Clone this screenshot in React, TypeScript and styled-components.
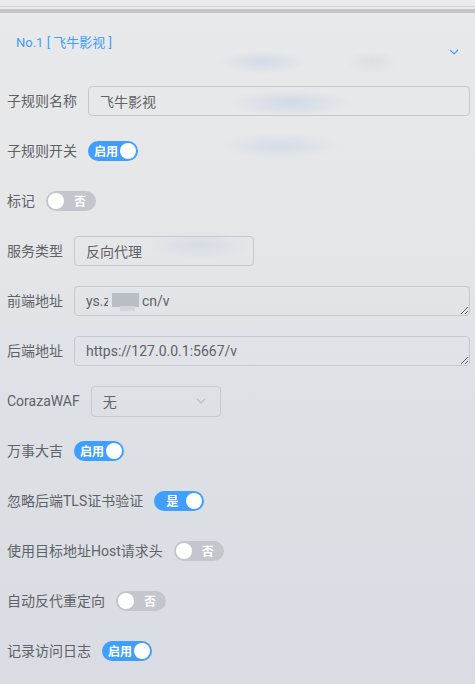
import React from "react";
import styled, { createGlobalStyle } from "styled-components";

const Global = createGlobalStyle`
  html, body { margin: 0; padding: 0; }
  body {
    font-family: Roboto, "Noto Sans CJK SC", sans-serif;
    background: #e6e7e9;
  }
  * { box-sizing: border-box; }
`;

const Page = styled.div`
  width: 475px;
  height: 684px;
  overflow: hidden;
  display: flex;
  flex-direction: column;
  background-color: #e6e8ea;
  background-image:
    radial-gradient(ellipse 45px 12px at 262px 62px, rgba(196, 210, 230, 0.6), rgba(196, 210, 230, 0) 100%),
    radial-gradient(ellipse 26px 12px at 372px 62px, rgba(210, 212, 216, 0.5), rgba(210, 212, 216, 0) 100%),
    radial-gradient(ellipse 62px 14px at 290px 103px, rgba(198, 210, 228, 0.65), rgba(198, 210, 228, 0) 100%),
    radial-gradient(ellipse 60px 13px at 280px 146px, rgba(198, 210, 228, 0.55), rgba(198, 210, 228, 0) 100%),
    radial-gradient(ellipse 50px 14px at 200px 245px, rgba(200, 210, 226, 0.5), rgba(200, 210, 226, 0) 100%),
    linear-gradient(180deg, #e8e9ea 0%, #e6e7e9 30%, #dde1e6 60%, #d9dde3 100%);
`;

const TopStrip = styled.div`
  height: 13px;
  flex: none;
  background: #ebebeb;
  border-top: 6px solid #ebebeb;
  display: flex;
  flex-direction: column;
`;

const TopLine = styled.div`
  height: 1px;
  background: #d2d3d4;
  margin-bottom: 2px;
`;

const TopBand = styled.div`
  height: 4px;
  background: #c2c6cc;
`;

const Panel = styled.div`
  flex: 1;
  display: flex;
  flex-direction: column;
  padding: 20px 5px 0 7px;
`;

const Header = styled.div`
  display: flex;
  justify-content: space-between;
  align-items: flex-start;
  padding: 0 11px 0 9px;
  height: 53px;
`;

const Title = styled.div`
  color: #409eff;
  font-size: 13px;
  line-height: 20px;
`;

const Chevron = styled.svg`
  margin-top: 16px;
`;

const Form = styled.div`
  display: flex;
  flex-direction: column;
  gap: 20px;
`;

const Row = styled.div`
  display: flex;
  align-items: center;
  height: 30px;
`;

const Label = styled.span`
  font-size: 14px;
  color: #606266;
  margin-right: 11px;
  white-space: nowrap;
  line-height: 20px;
  font-family: Roboto, "Noto Sans CJK SC", sans-serif;
`;

const Input = styled.input<{ $w?: number }>`
  height: 30px;
  ${(p) => (p.$w ? `width: ${p.$w}px;` : "flex: 1;")}
  border: 1px solid #c6c9ce;
  border-radius: 4px;
  background: transparent;
  padding: 0 11px;
  font-size: 14px;
  color: #606266;
  font-family: Roboto, "Noto Sans CJK SC", sans-serif;
  outline: none;
`;

const AreaWrap = styled.div`
  flex: 1;
  position: relative;
  height: 30px;
  display: flex;
`;

const Area = styled.textarea`
  flex: 1;
  height: 30px;
  border: 1px solid #c6c9ce;
  border-radius: 4px;
  background: transparent;
  padding: 5px 11px;
  font-size: 14px;
  line-height: 18px;
  color: #606266;
  font-family: Roboto, "Noto Sans CJK SC", sans-serif;
  outline: none;
  resize: vertical;
  overflow: hidden;
`;

const Mask = styled.div`
  position: absolute;
  left: 34px;
  top: 4px;
  width: 34px;
  height: 22px;
  background: #e0e3e7;
  filter: blur(0.6px);
  &::before {
    content: "";
    position: absolute;
    left: 4px;
    top: 3px;
    width: 27px;
    height: 14px;
    background: #b9bdc4;
  }
  &::after {
    content: "";
    position: absolute;
    left: 12px;
    top: 16px;
    width: 15px;
    height: 5px;
    background: #d2d5da;
  }
`;

const Select = styled.div`
  width: 130px;
  height: 31px;
  border: 1px solid #c6c9ce;
  border-radius: 4px;
  display: flex;
  align-items: center;
  justify-content: space-between;
  padding: 0 14px 0 11px;
  font-size: 14px;
  color: #606266;
`;

const SwitchTrack = styled.div<{ $on: boolean }>`
  width: 50px;
  height: 20px;
  border-radius: 10px;
  background: ${(p) => (p.$on ? "#409eff" : "#c3c6cc")};
  display: flex;
  flex-direction: ${(p) => (p.$on ? "row" : "row-reverse")};
  align-items: center;
  padding: ${(p) => (p.$on ? "0 2px 0 4px" : "0 0 0 2px")};
`;

const SwitchText = styled.span`
  flex: 1;
  text-align: center;
  color: #ffffff;
  font-size: 12px;
  font-weight: 700;
  line-height: 20px;
  font-family: "Noto Sans CJK SC", sans-serif;
`;

const Knob = styled.span`
  width: 16px;
  height: 16px;
  border-radius: 50%;
  background: #ffffff;
  flex: none;
`;

const Switch = ({ on, text }: { on: boolean; text: string }) => (
  <SwitchTrack $on={on}>
    <SwitchText>{text}</SwitchText>
    <Knob />
  </SwitchTrack>
);

export default function App() {
  return (
    <Page>
      <Global />
      <TopStrip>
        <TopLine />
        <TopBand />
      </TopStrip>
      <Panel>
        <Header>
          <Title>No.1 [ 飞牛影视 ]</Title>
          <Chevron width="10" height="6" viewBox="0 0 10 6">
            <path d="M1 1 L5 5 L9 1" fill="none" stroke="#409eff" strokeWidth="1.1" />
          </Chevron>
        </Header>
        <Form>
          <Row>
            <Label>子规则名称</Label>
            <Input readOnly value="飞牛影视" />
          </Row>
          <Row>
            <Label>子规则开关</Label>
            <Switch on text="启用" />
          </Row>
          <Row>
            <Label>标记</Label>
            <Switch on={false} text="否" />
          </Row>
          <Row>
            <Label>服务类型</Label>
            <Input readOnly value="反向代理" $w={180} />
          </Row>
          <Row>
            <Label>前端地址</Label>
            <AreaWrap>
              <Area readOnly value="ys.zxxxx.cn/v" />
              <Mask />
            </AreaWrap>
          </Row>
          <Row>
            <Label>后端地址</Label>
            <AreaWrap>
              <Area readOnly value="https://127.0.0.1:5667/v" />
            </AreaWrap>
          </Row>
          <Row>
            <Label>CorazaWAF</Label>
            <Select>
              <span>无</span>
              <svg width="10" height="6" viewBox="0 0 10 6">
                <path d="M1 1 L5 5 L9 1" fill="none" stroke="#b8bcc4" strokeWidth="1.1" />
              </svg>
            </Select>
          </Row>
          <Row>
            <Label>万事大吉</Label>
            <Switch on text="启用" />
          </Row>
          <Row>
            <Label>忽略后端TLS证书验证</Label>
            <Switch on text="是" />
          </Row>
          <Row>
            <Label>使用目标地址Host请求头</Label>
            <Switch on={false} text="否" />
          </Row>
          <Row>
            <Label>自动反代重定向</Label>
            <Switch on={false} text="否" />
          </Row>
          <Row>
            <Label>记录访问日志</Label>
            <Switch on text="启用" />
          </Row>
        </Form>
      </Panel>
    </Page>
  );
}
